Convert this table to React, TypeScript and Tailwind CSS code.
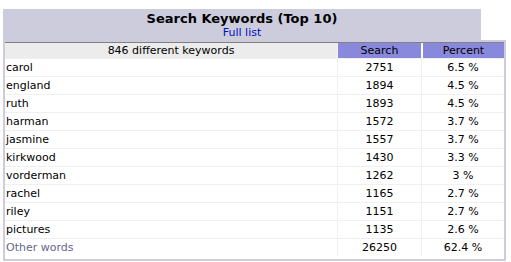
const rows = [
  { word: 'carol', hits: 2751, pct: '6.5 %' },
  { word: 'england', hits: 1894, pct: '4.5 %' },
  { word: 'ruth', hits: 1893, pct: '4.5 %' },
  { word: 'harman', hits: 1572, pct: '3.7 %' },
  { word: 'jasmine', hits: 1557, pct: '3.7 %' },
  { word: 'kirkwood', hits: 1430, pct: '3.3 %' },
  { word: 'vorderman', hits: 1262, pct: '3 %' },
  { word: 'rachel', hits: 1165, pct: '2.7 %' },
  { word: 'riley', hits: 1151, pct: '2.7 %' },
  { word: 'pictures', hits: 1135, pct: '2.6 %' },
];

const App = () => {
  return (
    <div className="min-h-[262px] bg-white pl-[3px] pt-[9px] font-['Verdana','DejaVu_Sans',sans-serif] text-black">
      <div className="flex h-[31px] w-[478px] flex-col items-center bg-[#CCCCDD] pt-[3px] leading-none">
        <span className="text-[13px] font-bold">Search Keywords (Top 10)</span>
        <a href="#" className="mt-[2px] text-[11px] text-[#0011BB]">
          Full list
        </a>
      </div>

      <div className="w-[503px] border-2 border-[#CCCCDD] pb-[3px] text-[11px]">
        <div className="grid h-[16px] grid-cols-[332px_84px_83px] border-t border-[#808080] leading-[15px]">
          <div className="bg-[#ECECEC] text-center">846 different keywords</div>
          <div className="border-l border-[#F4F4F4] bg-[#8888DD] text-center">Search</div>
          <div className="border-l-2 border-white bg-[#8888DD] text-center">Percent</div>
        </div>

        {rows.map((r) => (
          <div
            key={r.word}
            className="grid h-[18px] grid-cols-[332px_84px_83px] border-t border-[#F0F0F0] leading-[17px]"
          >
            <div className="pl-[1px]">{r.word}</div>
            <div className="border-l border-[#F0F0F0] text-center">{r.hits}</div>
            <div className="border-l border-[#F0F0F0] text-center">{r.pct}</div>
          </div>
        ))}

        <div className="grid h-[18px] grid-cols-[332px_84px_83px] border-t border-[#F0F0F0] leading-[17px]">
          <div className="pl-[1px] text-[#666688]">Other words</div>
          <div className="border-l border-[#F0F0F0] text-center">26250</div>
          <div className="border-l border-[#F0F0F0] text-center">62.4 %</div>
        </div>
      </div>
    </div>
  );
};

export default App;
